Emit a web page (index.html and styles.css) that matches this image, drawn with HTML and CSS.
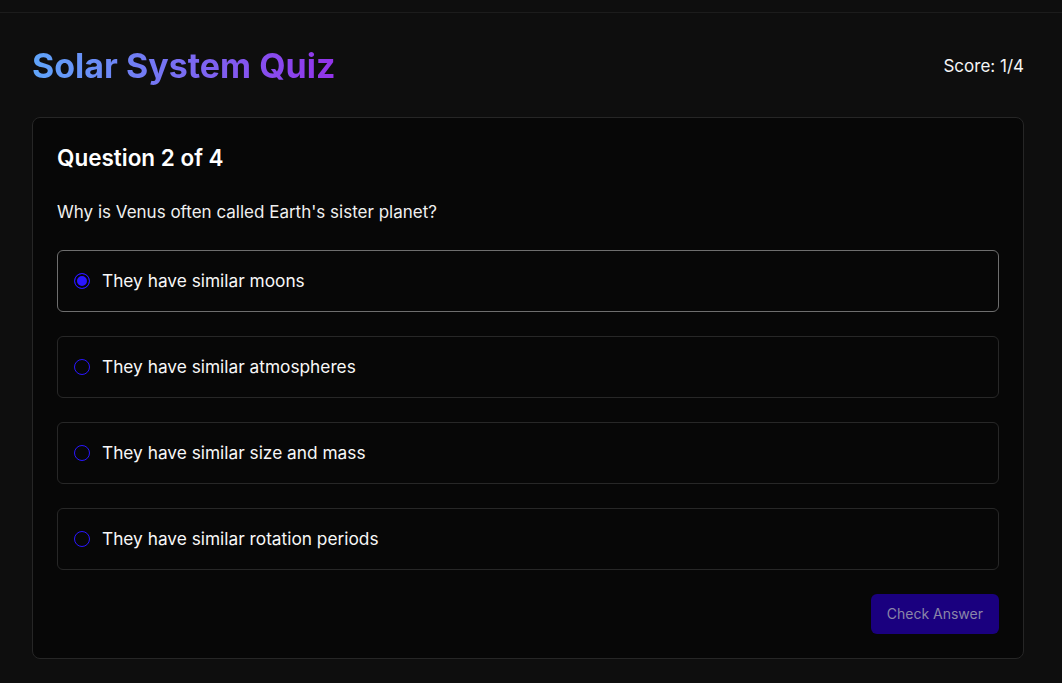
FILE: index.html
```html
<!DOCTYPE html>
<html lang="en">
<head>
<meta charset="utf-8">
<title>Solar System Quiz</title>
<link rel="stylesheet" href="styles.css">
</head>
<body>
<div class="topbar"></div>
<main class="page">
  <header class="header">
    <h1 class="title">Solar System Quiz</h1>
    <div class="score">Score: 1/4</div>
  </header>
  <section class="card">
    <h2 class="q-head">Question 2 of 4</h2>
    <p class="q-text">Why is Venus often called Earth's sister planet?</p>
    <div class="options">
      <label class="option selected">
        <span class="radio checked"></span>
        <span class="opt-text">They have similar moons</span>
      </label>
      <label class="option">
        <span class="radio"></span>
        <span class="opt-text">They have similar atmospheres</span>
      </label>
      <label class="option">
        <span class="radio"></span>
        <span class="opt-text">They have similar size and mass</span>
      </label>
      <label class="option">
        <span class="radio"></span>
        <span class="opt-text">They have similar rotation periods</span>
      </label>
    </div>
    <div class="actions">
      <button class="check-btn" type="button">Check Answer</button>
    </div>
  </section>
</main>
</body>
</html>
```

FILE: styles.css
```css
* { box-sizing: border-box; }
html, body { margin: 0; padding: 0; }
body {
  background: #0e0e0e;
  color: #f5f5f5;
  font-family: Inter, "Noto Sans", sans-serif;
  min-height: 683px;
}
.topbar {
  height: 13px;
  border-bottom: 1px solid #1c1c1c;
  background: #0e0e0e;
}
.page {
  padding: 33px 38px 24px 32px;
}
.header {
  display: flex;
  justify-content: space-between;
  align-items: center;
  margin-bottom: 31px;
}
.title {
  margin: 0;
  font-size: 34px;
  line-height: 40px;
  font-weight: 700;
  background: linear-gradient(90deg, #60a5fa, #9333ea);
  -webkit-background-clip: text;
  background-clip: text;
  color: transparent;
}
.score {
  font-size: 17px;
  line-height: 24px;
  color: #f5f5f5;
}
.card {
  background: #070707;
  border: 1px solid #262626;
  border-radius: 8px;
  padding: 24px;
}
.q-head {
  margin: 0 0 24px;
  font-size: 22.5px;
  line-height: 32px;
  font-weight: 600;
  color: #ffffff;
}
.q-text {
  margin: 0 0 24px;
  font-size: 17px;
  line-height: 28px;
  color: #f0f0f0;
}
.options {
  display: flex;
  flex-direction: column;
  gap: 24px;
}
.option {
  display: flex;
  align-items: center;
  gap: 12px;
  padding: 16px;
  border: 1px solid #272727;
  border-radius: 6px;
  cursor: pointer;
}
.option.selected {
  border-color: #6e6e6e;
}
.radio {
  width: 16px;
  height: 16px;
  border-radius: 50%;
  border: 1px solid #2a16ff;
  flex: none;
}
.radio.checked {
  background: #2a16ff;
  box-shadow: inset 0 0 0 2px #070707;
  border-color: #2a16ff;
}
.opt-text {
  font-size: 17.3px;
  line-height: 28px;
  color: #f8f8f8;
}
.actions {
  display: flex;
  justify-content: flex-end;
  margin-top: 24px;
}
.check-btn {
  font-family: inherit;
  font-size: 14px;
  line-height: 20px;
  padding: 10px 16px;
  border: none;
  border-radius: 6px;
  background: #1a007f;
  color: #8a86a8;
}
```
